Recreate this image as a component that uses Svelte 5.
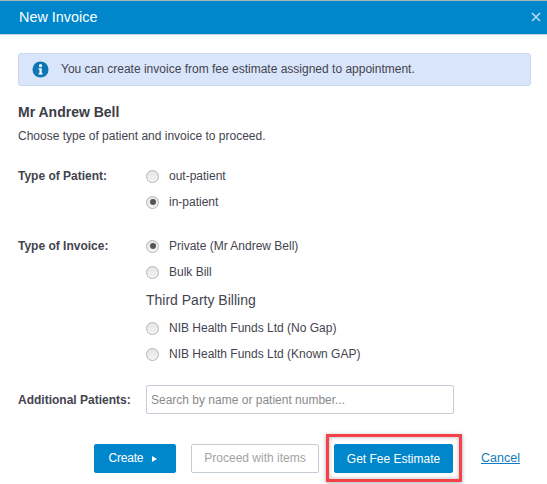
<script>
  const patientTypes = [
    { label: "out-patient", checked: false },
    { label: "in-patient", checked: true },
  ];
  const invoiceTypes = [
    { label: "Private (Mr Andrew Bell)", checked: true },
    { label: "Bulk Bill", checked: false },
  ];
  const thirdParty = [
    { label: "NIB Health Funds Ltd (No Gap)", checked: false },
    { label: "NIB Health Funds Ltd (Known GAP)", checked: false },
  ];
</script>

{#snippet radio(item)}
  <div class="radio">
    <span class="dot" class:checked={item.checked}></span>
    <span>{item.label}</span>
  </div>
{/snippet}

<div class="modal">
  <header>
    <h1>New Invoice</h1>
    <svg class="close" viewBox="0 0 10 10" width="10" height="10">
      <path d="M1 1 9 9M9 1 1 9" stroke="#b5dcf2" stroke-width="1.6" fill="none" />
    </svg>
  </header>

  <div class="body">
    <div class="notice">
      <svg viewBox="0 0 18 18" width="17" height="17">
        <circle cx="9" cy="9" r="8.5" fill="#0f76b4" />
        <circle cx="9" cy="4.9" r="1.7" fill="#fff" />
        <path d="M6.9 7.6h3.4v5.5h1v1.3H6.9v-1.3h1v-4.2h-1z" fill="#fff" />
      </svg>
      <span>You can create invoice from fee estimate assigned to appointment.</span>
    </div>

    <h2>Mr Andrew Bell</h2>
    <p>Choose type of patient and invoice to proceed.</p>

    <div class="row patient">
      <div class="label">Type of Patient:</div>
      <div class="options">
        {#each patientTypes as item}
          {@render radio(item)}
        {/each}
      </div>
    </div>

    <div class="row invoice">
      <div class="label">Type of Invoice:</div>
      <div class="options">
        {#each invoiceTypes as item}
          {@render radio(item)}
        {/each}
        <h3>Third Party Billing</h3>
        {#each thirdParty as item}
          {@render radio(item)}
        {/each}
      </div>
    </div>

    <div class="row additional">
      <div class="label">Additional Patients:</div>
      <input type="text" placeholder="Search by name or patient number..." />
    </div>

    <div class="actions">
      <button class="btn primary create">Create <span class="arrow"></span></button>
      <button class="btn ghost">Proceed with items</button>
      <div class="highlight">
        <button class="btn primary estimate">Get Fee Estimate</button>
      </div>
      <a href="#cancel">Cancel</a>
    </div>
  </div>
</div>

<style>
  :global(body) {
    margin: 0;
    background: #fff;
  }

  .modal {
    width: 547px;
    height: 484px;
    overflow: hidden;
    font-family: "Liberation Sans", Arial, sans-serif;
    font-size: 12px;
    color: #44444f;
  }

  header {
    display: flex;
    align-items: center;
    justify-content: space-between;
    box-sizing: border-box;
    height: 35px;
    padding: 0 6px 2px 19px;
    background: #0087cb;
    border-top: 1px solid #a9b4bb;
    border-bottom: 1px solid #c5d3dc;
  }

  h1 {
    margin: 0;
    font-size: 14.4px;
    font-weight: 400;
    color: #fff;
  }

  .body {
    padding: 18px 16px 0 18px;
  }

  .notice {
    display: flex;
    align-items: center;
    gap: 12px;
    box-sizing: border-box;
    height: 33px;
    padding: 0 0 1px 13px;
    background: #d9e5fa;
    border: 1px solid #c7d8f0;
    border-radius: 3px;
  }

  h2 {
    margin: 18px 0 0;
    font-size: 14px;
    line-height: 17px;
    color: #3c3c46;
  }

  p {
    margin: 7px 0 0;
    line-height: 16px;
  }

  .row {
    display: flex;
  }

  .label {
    width: 128px;
    flex: none;
    font-weight: 700;
    line-height: 26px;
  }

  .patient {
    margin-top: 19px;
  }

  .invoice {
    margin-top: 18px;
  }

  .additional {
    margin-top: 18px;
    align-items: center;
  }

  .radio {
    display: flex;
    align-items: center;
    gap: 10px;
    height: 26px;
  }

  .dot {
    position: relative;
    box-sizing: border-box;
    width: 13px;
    height: 13px;
    border-radius: 50%;
    border: 1px solid #b4b4b4;
    background: linear-gradient(#e4e4e4, #f5f5f5);
  }

  .dot.checked::after {
    content: "";
    position: absolute;
    inset: 2.5px;
    border-radius: 50%;
    background: #555;
  }

  h3 {
    margin: 0;
    font-size: 14px;
    font-weight: 400;
    line-height: 30px;
    height: 30px;
  }

  input {
    box-sizing: border-box;
    width: 308px;
    height: 29px;
    padding: 0 4px;
    border: 1px solid #c4ccd6;
    border-radius: 2px;
    font-family: inherit;
    font-size: 12px;
    color: #44444f;
  }

  input::placeholder {
    color: #8a8a8a;
    opacity: 1;
  }

  .actions {
    display: flex;
    align-items: center;
    margin-top: 20px;
    padding-left: 76px;
  }

  .btn {
    box-sizing: border-box;
    height: 29px;
    border-radius: 2px;
    font-family: inherit;
    font-size: 12px;
    padding: 0;
    cursor: pointer;
  }

  .primary {
    background: #0087cb;
    border: 1px solid #0087cb;
    color: #fff;
  }

  .create {
    width: 82px;
    padding-right: 4px;
    letter-spacing: -0.2px;
  }

  .arrow {
    display: inline-block;
    margin-left: 6px;
    border-left: 5px solid #fff;
    border-top: 3px solid transparent;
    border-bottom: 3px solid transparent;
  }

  .ghost {
    width: 128px;
    margin-left: 15px;
    background: #fff;
    border: 1px solid #c4ccd6;
    color: #a3a3a3;
  }

  .highlight {
    box-sizing: border-box;
    width: 136px;
    height: 48px;
    margin-left: 7px;
    padding: 7px 5px 6px;
    border: 3px solid #f5414a;
    box-shadow: 0 1px 4px rgba(0, 0, 0, 0.35), inset 0 0 4px rgba(0, 0, 0, 0.3);
  }

  .estimate {
    width: 119px;
    display: block;
    margin: 0;
  }

  a {
    margin-left: 19px;
    font-size: 12.5px;
    color: #0f7cc0;
  }
</style>
